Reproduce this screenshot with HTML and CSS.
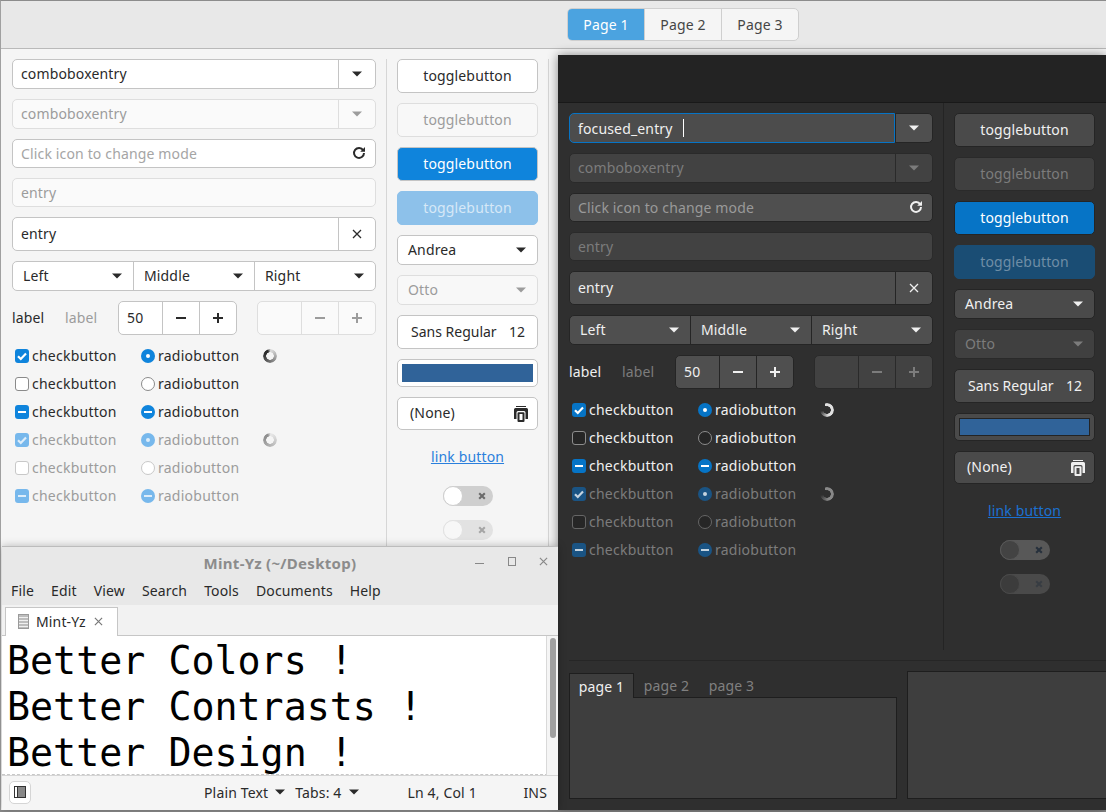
FILE: index.html
```html
<!DOCTYPE html>
<html>
	<head>
		<meta charset="utf-8">
		<title>Mint-Yz</title>
		<link rel="stylesheet" href="styles.css">
	</head>
	<body>
		<svg class="sprite" width="0" height="0">
			<symbol id="i-down" viewBox="0 0 10 6"><path d="M0 0.5h10L5 5.5z" fill="currentColor"/></symbol>
			<symbol id="i-refresh" viewBox="0 0 14 14"><path d="M11.2 4.2A5 5 0 1 0 12 7" fill="none" stroke="currentColor" stroke-width="2"/><path d="M8.2 5.8L13 1v4.8z" fill="currentColor"/></symbol>
			<symbol id="i-close" viewBox="0 0 10 10"><path d="M1 1l8 8M9 1l-8 8" fill="none" stroke="currentColor" stroke-width="1.3"/></symbol>
			<symbol id="i-x" viewBox="0 0 10 10"><path d="M1.500 1.500l7 7M8.500 1.500l-7 7" fill="none" stroke="currentColor" stroke-width="2.600"/></symbol>
			<symbol id="i-minus" viewBox="0 0 12 12"><path d="M1 5h10v2H1z" fill="currentColor"/></symbol>
			<symbol id="i-plus" viewBox="0 0 12 12"><path d="M1 5h4V1h2v4h4v2H7v4H5V7H1z" fill="currentColor"/></symbol>
			<symbol id="i-copy" viewBox="0 0 16 16"><path fill-rule="evenodd" d="M3 0h10v1H3zM2.500 2h11A1.500 1.500 0 0 1 15 3.500V13h-2.500V6.500A1.500 1.500 0 0 0 11 5H5a1.500 1.500 0 0 0-1.500 1.500V13H1V3.500A1.500 1.500 0 0 1 2.500 2zM5.500 6.200h5a1 1 0 0 1 1 1V15a1 1 0 0 1-1 1h-5a1 1 0 0 1-1-1V7.200a1 1 0 0 1 1-1zM6.500 8v6h3V8z" fill="currentColor"/></symbol>
			<symbol id="i-check" viewBox="0 0 14 14"><path d="M3 7.200l2.800 2.800L11 4.600" fill="none" stroke="currentColor" stroke-width="2.200"/></symbol>
		</svg>

		<!-- back window -->
		<div class="window light main-win">
			<div class="headerbar">
				<div class="stack">
					<span class="stack-btn on">Page 1</span>
					<span class="stack-btn">Page 2</span>
					<span class="stack-btn">Page 3</span>
				</div>
			</div>
			<div class="panel">
				<div class="col-left">
					<div class="linked h30">
						<div class="field">comboboxentry</div>
						<div class="side"><svg class="arrow"><use href="#i-down"/></svg></div>
					</div>
					<div class="linked h30 off">
						<div class="field">comboboxentry</div>
						<div class="side"><svg class="arrow"><use href="#i-down"/></svg></div>
					</div>
					<div class="linked h29">
						<div class="field hint">Click icon to change mode</div>
						<svg class="ico-refresh"><use href="#i-refresh"/></svg>
					</div>
					<div class="linked h29 off">
						<div class="field">entry</div>
					</div>
					<div class="linked h34">
						<div class="field">entry</div>
						<div class="side"><svg class="ico-close"><use href="#i-close"/></svg></div>
					</div>
					<div class="linked h30">
						<div class="seg">Left<svg class="arrow"><use href="#i-down"/></svg></div>
						<div class="seg">Middle<svg class="arrow"><use href="#i-down"/></svg></div>
						<div class="seg">Right<svg class="arrow"><use href="#i-down"/></svg></div>
					</div>
					<div class="label-row">
						<span class="lbl">label</span>
						<span class="lbl dim">label</span>
						<div class="linked h34 spin">
							<div class="spin-val">50</div>
							<div class="spin-btn"><svg><use href="#i-minus"/></svg></div>
							<div class="spin-btn"><svg><use href="#i-plus"/></svg></div>
						</div>
						<div class="linked h34 spin off">
							<div class="spin-val"></div>
							<div class="spin-btn"><svg><use href="#i-minus"/></svg></div>
							<div class="spin-btn"><svg><use href="#i-plus"/></svg></div>
						</div>
					</div>
					<div class="checks">
						<div class="opt"><i class="box on"><svg><use href="#i-check"/></svg></i>checkbutton</div>
						<div class="opt"><i class="radio on"><b class="dot"></b></i>radiobutton</div>
						<i class="spinner"></i>
						<div class="opt"><i class="box"></i>checkbutton</div>
						<div class="opt"><i class="radio"></i>radiobutton</div>
						<span></span>
						<div class="opt"><i class="box on"><b class="dash"></b></i>checkbutton</div>
						<div class="opt"><i class="radio on"><b class="dash"></b></i>radiobutton</div>
						<span></span>
						<div class="opt off"><i class="box on"><svg><use href="#i-check"/></svg></i>checkbutton</div>
						<div class="opt off"><i class="radio on"><b class="dot"></b></i>radiobutton</div>
						<i class="spinner off"></i>
						<div class="opt off"><i class="box"></i>checkbutton</div>
						<div class="opt off"><i class="radio"></i>radiobutton</div>
						<span></span>
						<div class="opt off"><i class="box on"><b class="dash"></b></i>checkbutton</div>
						<div class="opt off"><i class="radio on"><b class="dash"></b></i>radiobutton</div>
						<span></span>
					</div>
				</div>
				<div class="vsep"></div>
				<div class="col-right">
					<div class="btn h34">togglebutton</div>
					<div class="btn h34 off">togglebutton</div>
					<div class="btn h34 toggled">togglebutton</div>
					<div class="btn h34 toggled off">togglebutton</div>
					<div class="btn h30 combo">Andrea<svg class="arrow"><use href="#i-down"/></svg></div>
					<div class="btn h30 combo off">Otto<svg class="arrow"><use href="#i-down"/></svg></div>
					<div class="btn h34 font-btn"><span>Sans Regular</span><span>12</span></div>
					<div class="btn color-btn"><div class="swatch"></div></div>
					<div class="btn file-btn">(None)<svg class="ico-copy"><use href="#i-copy"/></svg></div>
					<a class="link-btn">link button</a>
					<div class="switch"><i class="knob"></i><svg class="ico-x"><use href="#i-x"/></svg></div>
					<div class="switch off"><i class="knob"></i><svg class="ico-x"><use href="#i-x"/></svg></div>
				</div>
				<div class="vsep last"></div>
			</div>
		</div>

		<!-- dark window -->
		<div class="window dark dark-win">
			<div class="headerbar"></div>
			<div class="panel">
				<div class="col-left">
					<div class="linked h30">
						<div class="field focus">focused_entry<i class="caret"></i></div>
						<div class="side"><svg class="arrow"><use href="#i-down"/></svg></div>
					</div>
					<div class="linked h30 off">
						<div class="field">comboboxentry</div>
						<div class="side"><svg class="arrow"><use href="#i-down"/></svg></div>
					</div>
					<div class="linked h29">
						<div class="field hint">Click icon to change mode</div>
						<svg class="ico-refresh"><use href="#i-refresh"/></svg>
					</div>
					<div class="linked h29 off">
						<div class="field">entry</div>
					</div>
					<div class="linked h34">
						<div class="field">entry</div>
						<div class="side"><svg class="ico-close"><use href="#i-close"/></svg></div>
					</div>
					<div class="linked h30">
						<div class="seg">Left<svg class="arrow"><use href="#i-down"/></svg></div>
						<div class="seg">Middle<svg class="arrow"><use href="#i-down"/></svg></div>
						<div class="seg">Right<svg class="arrow"><use href="#i-down"/></svg></div>
					</div>
					<div class="label-row">
						<span class="lbl">label</span>
						<span class="lbl dim">label</span>
						<div class="linked h34 spin">
							<div class="spin-val">50</div>
							<div class="spin-btn"><svg><use href="#i-minus"/></svg></div>
							<div class="spin-btn"><svg><use href="#i-plus"/></svg></div>
						</div>
						<div class="linked h34 spin off">
							<div class="spin-val"></div>
							<div class="spin-btn"><svg><use href="#i-minus"/></svg></div>
							<div class="spin-btn"><svg><use href="#i-plus"/></svg></div>
						</div>
					</div>
					<div class="checks">
						<div class="opt"><i class="box on"><svg><use href="#i-check"/></svg></i>checkbutton</div>
						<div class="opt"><i class="radio on"><b class="dot"></b></i>radiobutton</div>
						<i class="spinner"></i>
						<div class="opt"><i class="box"></i>checkbutton</div>
						<div class="opt"><i class="radio"></i>radiobutton</div>
						<span></span>
						<div class="opt"><i class="box on"><b class="dash"></b></i>checkbutton</div>
						<div class="opt"><i class="radio on"><b class="dash"></b></i>radiobutton</div>
						<span></span>
						<div class="opt off"><i class="box on"><svg><use href="#i-check"/></svg></i>checkbutton</div>
						<div class="opt off"><i class="radio on"><b class="dot"></b></i>radiobutton</div>
						<i class="spinner off"></i>
						<div class="opt off"><i class="box"></i>checkbutton</div>
						<div class="opt off"><i class="radio"></i>radiobutton</div>
						<span></span>
						<div class="opt off"><i class="box on"><b class="dash"></b></i>checkbutton</div>
						<div class="opt off"><i class="radio on"><b class="dash"></b></i>radiobutton</div>
						<span></span>
					</div>
				</div>
				<div class="vsep"></div>
				<div class="col-right">
					<div class="btn h34">togglebutton</div>
					<div class="btn h34 off">togglebutton</div>
					<div class="btn h34 toggled">togglebutton</div>
					<div class="btn h34 toggled off">togglebutton</div>
					<div class="btn h30 combo">Andrea<svg class="arrow"><use href="#i-down"/></svg></div>
					<div class="btn h30 combo off">Otto<svg class="arrow"><use href="#i-down"/></svg></div>
					<div class="btn h34 font-btn"><span>Sans Regular</span><span>12</span></div>
					<div class="btn color-btn"><div class="swatch"></div></div>
					<div class="btn file-btn">(None)<svg class="ico-copy"><use href="#i-copy"/></svg></div>
					<a class="link-btn">link button</a>
					<div class="switch"><i class="knob"></i><svg class="ico-x"><use href="#i-x"/></svg></div>
					<div class="switch off"><i class="knob"></i><svg class="ico-x"><use href="#i-x"/></svg></div>
				</div>
			</div>
			<div class="hsep"></div>
			<div class="bottom-row">
				<div class="notebook">
					<div class="tabs">
						<span class="nb-tab on">page 1</span>
						<span class="nb-tab">page 2</span>
						<span class="nb-tab">page 3</span>
					</div>
					<div class="nb-page"></div>
				</div>
				<div class="frame"></div>
			</div>
		</div>

		<!-- editor window -->
		<div class="window editor-win">
			<div class="titlebar">
				<span class="title">Mint-Yz (~/Desktop)</span>
				<div class="win-btns">
					<i class="win-min"></i>
					<i class="win-max"></i>
					<svg class="win-close"><use href="#i-close"/></svg>
				</div>
			</div>
			<div class="menubar">
				<span>File</span><span>Edit</span><span>View</span><span>Search</span><span>Tools</span><span>Documents</span><span>Help</span>
			</div>
			<div class="tabbar">
				<div class="doc-tab">
					<i class="doc-icon"></i>
					<span>Mint-Yz</span>
					<svg class="doc-close"><use href="#i-close"/></svg>
				</div>
			</div>
			<div class="editor">
				<pre class="code">Better Colors !
Better Contrasts !
Better Design !</pre>
				<div class="scroll"><i class="thumb"></i></div>
			</div>
			<div class="statusbar">
				<div class="side-toggle"><i class="side-ico"></i></div>
				<span class="st st-lang">Plain Text<svg class="arrow"><use href="#i-down"/></svg></span>
				<span class="st st-tabs">Tabs: 4<svg class="arrow"><use href="#i-down"/></svg></span>
				<span class="st st-pos">Ln 4, Col 1</span>
				<span class="st st-ins">INS</span>
			</div>
		</div>
	</body>
</html>
```

FILE: styles.css
```css
*{
	box-sizing: border-box;
}
html, body{
	margin: 0;
	padding: 0;
	height: 100%;
	overflow: hidden;
}
body{
	background: #8b8b8b;
	font-family: "Noto Sans", sans-serif;
	font-size: 14px;
	letter-spacing: 0.15px;
	position: relative;
}
i, b{
	display: block;
	font-style: normal;
}
.sprite{
	position: absolute;
}

/* colours per theme */
.light{
	--bg: #f5f5f5;
	--head: #e8e8e8;
	--head-line: #b9b9b9;
	--fg: #2a2a2a;
	--off-fg: #9c9c9c;
	--hint: #a5a5a5;
	--entry: #ffffff;
	--entry-off: #fafafa;
	--line: #c4c4c4;
	--line-off: #dedede;
	--btn: #ffffff;
	--btn-off: #f8f8f8;
	--blue: #0f84dc;
	--blue-off: #8dc1ea;
	--blue-fg: #ffffff;
	--blue-off-fg: #d6e8f7;
	--check-off: #77b8ec;
	--box: #ffffff;
	--box-line: #8a8a8a;
	--box-line-off: #c8c8c8;
	--sep: #d6d6d6;
	--link: #2a7fdc;
	--sw: #cfcfcf;
	--sw-off: #e2e2e2;
	--knob: #ffffff;
	--knob-off: #f7f7f7;
	--sw-x: #6a6a6a;
	--spin-a: #2d2d2d;
	--spin-b: rgba(45,45,45,0.15);
}
.dark{
	--bg: #2f2f2f;
	--head: #232323;
	--head-line: #191919;
	--fg: #f0f0f0;
	--off-fg: #7c7c7c;
	--hint: #9a9a9a;
	--entry: #4f4f4f;
	--entry-off: #424242;
	--line: #252525;
	--line-off: #2a2a2a;
	--btn: #4a4a4a;
	--btn-off: #404040;
	--blue: #0674c6;
	--blue-off: #1a4d74;
	--blue-fg: #ffffff;
	--blue-off-fg: #6f8da6;
	--check-off: #1a5484;
	--box: #262626;
	--box-line: #8d8d8d;
	--box-line-off: #666666;
	--sep: #242424;
	--link: #1b71d2;
	--sw: #585858;
	--sw-off: #4a4a4a;
	--knob: #434343;
	--knob-off: #3c3c3c;
	--sw-x: #26303c;
	--spin-a: #e0e0e0;
	--spin-b: rgba(224,224,224,0);
}

/* windows sit freely on the desktop */
.window{
	position: absolute;
	color: var(--fg);
	background: var(--bg);
}
.main-win{
	left: 0;
	top: 0;
	width: 1106px;
	height: 810px;
	border-top: 1px solid #8c8c8c;
	border-left: 1px solid #a0a0a0;
}
.dark-win{
	left: 558px;
	top: 55px;
	width: 548px;
	height: 755px;
	box-shadow: 0 0 10px rgba(0,0,0,0.45);
}
.editor-win{
	left: 2px;
	top: 546px;
	width: 556px;
	height: 264px;
	background: #f5f5f5;
	color: #2a2a2a;
	display: flex;
	flex-direction: column;
	box-shadow: 0 0 8px rgba(0,0,0,0.25);
	border-top: 1px solid #bcbcbc;
}

/* header */
.headerbar{
	background: var(--head);
	border-bottom: 1px solid var(--head-line);
	height: 48px;
	display: flex;
	align-items: center;
	padding: 0 0 0 566px;
}
.stack{
	display: flex;
	width: 232px;
	height: 33px;
	margin-bottom: 1px;
	background: #f5f5f5;
	border: 1px solid #cfcfcf;
	border-radius: 5px;
	color: #454545;
}
.stack-btn{
	flex: 1;
	display: flex;
	align-items: center;
	justify-content: center;
	border-left: 1px solid #cfcfcf;
}
.stack-btn.on{
	background: #4ba3e0;
	color: #fff;
	border-left: none;
	border-radius: 4px 0 0 4px;
}
.dark .headerbar{
	padding: 0;
}

.panel{
	display: flex;
	align-items: stretch;
	padding: 10px 0 0 11px;
	height: 498px;
}
.dark .panel{
	height: 547px;
}
.col-left{
	width: 364px;
	display: flex;
	flex-direction: column;
	gap: 10px;
}
.col-right{
	width: 141px;
	display: flex;
	flex-direction: column;
	gap: 10px;
}
.vsep{
	width: 1px;
	background: var(--sep);
	margin: 0 10px;
	flex: none;
}
.dark .vsep{
	margin-top: -10px;
}
.vsep.last{
	margin: 0 0 0 10px;
}

.h29{ height: 29px; }
.h30{ height: 30px; }
.h34{ height: 34px; }

/* linked entries and combos */
.linked{
	display: flex;
	align-items: stretch;
	flex: none;
	background: var(--entry);
	border: 1px solid var(--line);
	border-radius: 5px;
	position: relative;
}
.linked.off{
	background: var(--entry-off);
	border-color: var(--line-off);
	color: var(--off-fg);
}
.field{
	flex: 1;
	display: flex;
	align-items: center;
	padding-left: 8px;
}
.h30 .field, .h34 .field, .h30 .seg, .spin-val, .btn.h34, .btn.h30, .file-btn{
	padding-bottom: 2px;
}
.field.hint{
	color: var(--hint);
}
.h30 .field.focus{
	border: 1px solid #0674c6;
	margin: -1px 0 -1px -1px;
	border-radius: 5px 0 0 5px;
	padding: 0 0 0 8px;
	background: #4c4c4c;
}
.caret{
	width: 1px;
	height: 18px;
	background: #fff;
	margin-left: 10px;
}
.side{
	width: 37px;
	flex: none;
	display: flex;
	align-items: center;
	justify-content: center;
	border-left: 1px solid var(--line);
}
.linked.off .side{
	border-color: var(--line-off);
}
.arrow{
	width: 10px;
	height: 6px;
	flex: none;
}
.ico-refresh{
	width: 14px;
	height: 14px;
	margin: 6px 9px 0 0;
	flex: none;
}
.ico-close{
	width: 10px;
	height: 10px;
}
.seg{
	flex: 1;
	display: flex;
	align-items: center;
	justify-content: space-between;
	padding: 0 11px 0 10px;
	border-left: 1px solid var(--line);
}
.seg .arrow, .combo .arrow{
	margin-top: 2px;
}
.seg:first-child{
	border-left: none;
}

.label-row{
	display: flex;
	align-items: center;
	gap: 19px;
}
.lbl{
	width: 34px;
	padding-bottom: 2px;
}
.dim{
	color: var(--off-fg);
}
.spin{
	width: 119px;
}
.spin.off{
	margin-left: auto;
}
.spin-val{
	flex: 1;
	display: flex;
	align-items: center;
	padding-left: 8px;
}
.spin-btn{
	width: 37px;
	flex: none;
	display: flex;
	align-items: center;
	justify-content: center;
	border-left: 1px solid var(--line);
}
.spin.off .spin-btn{
	border-color: var(--line-off);
}
.spin-btn svg{
	width: 12px;
	height: 12px;
}

/* checks and radios */
.checks{
	display: grid;
	grid-template-columns: 126px 122px 1fr;
	grid-auto-rows: 22px;
	row-gap: 6px;
	align-items: center;
	padding-left: 3px;
	margin-top: -1px;
	letter-spacing: 0.25px;
}
.opt{
	display: flex;
	align-items: center;
	gap: 3px;
}
.opt.off{
	color: var(--off-fg);
}
.box, .radio{
	width: 14px;
	height: 14px;
	flex: none;
	background: var(--box);
	border: 1px solid var(--box-line);
	display: flex;
	align-items: center;
	justify-content: center;
	color: #fff;
	margin-top: 1px;
}
.box{
	border-radius: 3px;
}
.radio{
	border-radius: 50%;
}
.box.on, .radio.on{
	background: var(--blue);
	border: none;
}
.opt.off .box, .opt.off .radio{
	border-color: var(--box-line-off);
}
.opt.off .box.on, .opt.off .radio.on{
	background: var(--check-off);
}
.opt.off .box.on svg, .opt.off .dot, .opt.off .dash{
	opacity: 0.75;
}
.box svg{
	width: 14px;
	height: 14px;
}
.dot{
	width: 4px;
	height: 4px;
	border-radius: 50%;
	background: #fff;
}
.dash{
	width: 8px;
	height: 2px;
	background: #fff;
}
.spinner{
	width: 14px;
	height: 14px;
	border-radius: 50%;
	background: conic-gradient(from 20deg, var(--spin-b), var(--spin-a) 75%, var(--spin-a) 88%, var(--spin-b) 96%);
	-webkit-mask: radial-gradient(circle, transparent 3.500px, #000 4px);
	mask: radial-gradient(circle, transparent 3.500px, #000 4px);
	margin: 1px 0 0 0;
}
.dark .spinner{
	background: conic-gradient(from 340deg, var(--spin-a), var(--spin-a) 52%, var(--spin-b) 78%, var(--spin-b));
}
.spinner.off{
	opacity: 0.5;
}

/* right column buttons */
.btn{
	background: var(--btn);
	border: 1px solid var(--line);
	border-radius: 5px;
	display: flex;
	align-items: center;
	justify-content: center;
	flex: none;
}
.btn.off{
	background: var(--btn-off);
	border-color: var(--line-off);
	color: var(--off-fg);
}
.btn.toggled{
	background: var(--blue);
	color: var(--blue-fg);
}
.btn.toggled.off{
	background: var(--blue-off);
	border-color: var(--blue-off);
	color: var(--blue-off-fg);
}
.combo{
	justify-content: space-between;
	padding-left: 10px;
	padding-right: 11px;
}
.font-btn{
	justify-content: space-between;
	padding-left: 13px;
	padding-right: 12px;
	letter-spacing: 0;
}
.color-btn{
	height: 28px;
	padding: 4px;
}
.swatch{
	width: 100%;
	height: 100%;
	background: #306399;
	border: 1px solid var(--sep);
}
.light .swatch{
	border: none;
}
.file-btn{
	height: 33px;
	justify-content: space-between;
	padding-left: 12px;
	padding-right: 8px;
}
.file-btn .ico-copy{
	margin-top: 2px;
}
.ico-copy{
	width: 16px;
	height: 16px;
}
.link-btn{
	height: 32px;
	display: flex;
	align-items: center;
	justify-content: center;
	color: var(--link);
	text-decoration: underline;
}
.switch{
	width: 50px;
	height: 20px;
	margin: 4px auto 0;
	background: var(--sw);
	border-radius: 10px;
	display: flex;
	align-items: center;
	justify-content: space-between;
	padding-right: 7px;
	flex: none;
}
.switch.off{
	background: var(--sw-off);
}
.knob{
	width: 20px;
	height: 20px;
	border-radius: 50%;
	background: var(--knob);
	border: 1px solid var(--sw);
}
.switch.off .knob{
	background: var(--knob-off);
	border-color: var(--sw-off);
}
.ico-x{
	width: 8px;
	height: 8px;
	color: var(--sw-x);
}
.switch.off .ico-x{
	opacity: 0.5;
}

/* dark window bottom */
.hsep{
	height: 1px;
	background: #262626;
	margin: 10px 0 0 11px;
}
.bottom-row{
	display: flex;
	gap: 10px;
	padding: 10px 0 0 11px;
}
.notebook{
	width: 328px;
	display: flex;
	flex-direction: column;
	padding-top: 2px;
}
.tabs{
	display: flex;
	height: 25px;
	margin-bottom: -1px;
}
.nb-tab{
	width: 65px;
	display: flex;
	align-items: center;
	justify-content: center;
	color: #808080;
}
.nb-tab.on{
	color: #f0f0f0;
	background: #3e3e3e;
	border: 1px solid #1e1e1e;
	border-bottom: none;
	position: relative;
	z-index: 1;
}
.nb-page{
	height: 102px;
	background: #3e3e3e;
	border: 1px solid #1e1e1e;
}
.frame{
	flex: 1;
	height: 128px;
	background: #3e3e3e;
	border: 1px solid #1e1e1e;
	border-right: none;
}

/* editor window */
.titlebar{
	height: 34px;
	background: #e8e8e8;
	display: flex;
	align-items: center;
	justify-content: center;
	position: relative;
	flex: none;
}
.title{
	font-weight: 700;
	font-size: 15px;
	letter-spacing: 0.3px;
	color: #8c8c8c;
	margin-left: 0;
	padding-bottom: 2px;
}
.win-btns{
	position: absolute;
	right: 0;
	top: 0;
	height: 34px;
}
.win-min{
	position: absolute;
	right: 74px;
	top: 16px;
	width: 9px;
	height: 1px;
	background: #888;
}
.win-max{
	position: absolute;
	right: 42px;
	top: 10px;
	width: 8px;
	height: 9px;
	border: 1px solid #888;
}
.win-close{
	position: absolute;
	right: 10px;
	top: 10px;
	width: 9px;
	height: 9px;
	color: #888;
}
.menubar{
	height: 24px;
	background: #e8e8e8;
	display: flex;
	align-items: center;
	gap: 17px;
	padding: 0 0 6px 9px;
	flex: none;
}
.tabbar{
	height: 31px;
	background: #f2f2f2;
	border-bottom: 1px solid #c6c6c6;
	padding: 2px 0 0 3px;
	flex: none;
}
.doc-tab{
	width: 113px;
	height: 30px;
	background: #fff;
	border: 1px solid #c6c6c6;
	border-bottom: none;
	display: flex;
	align-items: center;
	padding: 0 0 2px 12px;
	position: relative;
}
.doc-icon{
	width: 11px;
	height: 15px;
	border: 1px solid #9a9a9a;
	background: repeating-linear-gradient(to bottom, #bdbdbd 0, #bdbdbd 2px, #f0f0f0 2px, #f0f0f0 3px);
	margin-right: 7px;
	flex: none;
}
.doc-close{
	width: 9px;
	height: 9px;
	margin-left: 8px;
	color: #777;
}
.editor{
	flex: 1;
	min-height: 0;
	background: #fff;
	position: relative;
	overflow: hidden;
}
.code{
	margin: 0;
	padding: 2px 0 0 5px;
	font-family: "DejaVu Sans Mono", monospace;
	font-size: 38.300px;
	line-height: 46px;
	letter-spacing: 0;
	color: #000;
	overflow: hidden;
	height: 100%;
	border-bottom: 1px dashed #c8c8c8;
}
.scroll{
	position: absolute;
	right: 0;
	top: 0;
	bottom: 0;
	width: 12px;
	background: #f5f5f5;
	border-left: 1px solid #d9d9d9;
}
.thumb{
	width: 6px;
	height: 100px;
	margin: 2px 0 0 3px;
	background: #a0a0a0;
	border-radius: 3px;
}
.statusbar{
	height: 35px;
	flex: none;
	background: #f5f5f5;
	border-top: 1px solid #d5d5d5;
	display: flex;
	align-items: center;
	padding: 0 11px 2px 7px;
}
.side-toggle{
	width: 22px;
	height: 23px;
	background: #fff;
	border: 1px solid #d5d5d5;
	border-radius: 5px;
	display: flex;
	align-items: center;
	justify-content: center;
}
.side-ico{
	width: 12px;
	height: 12px;
	background: linear-gradient(to right, #333 0, #333 1px, #fff 1px, #fff 3px, #333 3px, #333 4px, #888 4px, #888 11px, #333 11px);
	border-top: 1px solid #333;
	border-bottom: 1px solid #333;
}
.st{
	display: flex;
	align-items: center;
	gap: 7px;
}
.st-lang{
	margin-left: 173px;
}
.st-tabs{
	margin-left: 10px;
}
.st-pos{
	margin-left: 49px;
}
.st-ins{
	margin-left: auto;
}
```
